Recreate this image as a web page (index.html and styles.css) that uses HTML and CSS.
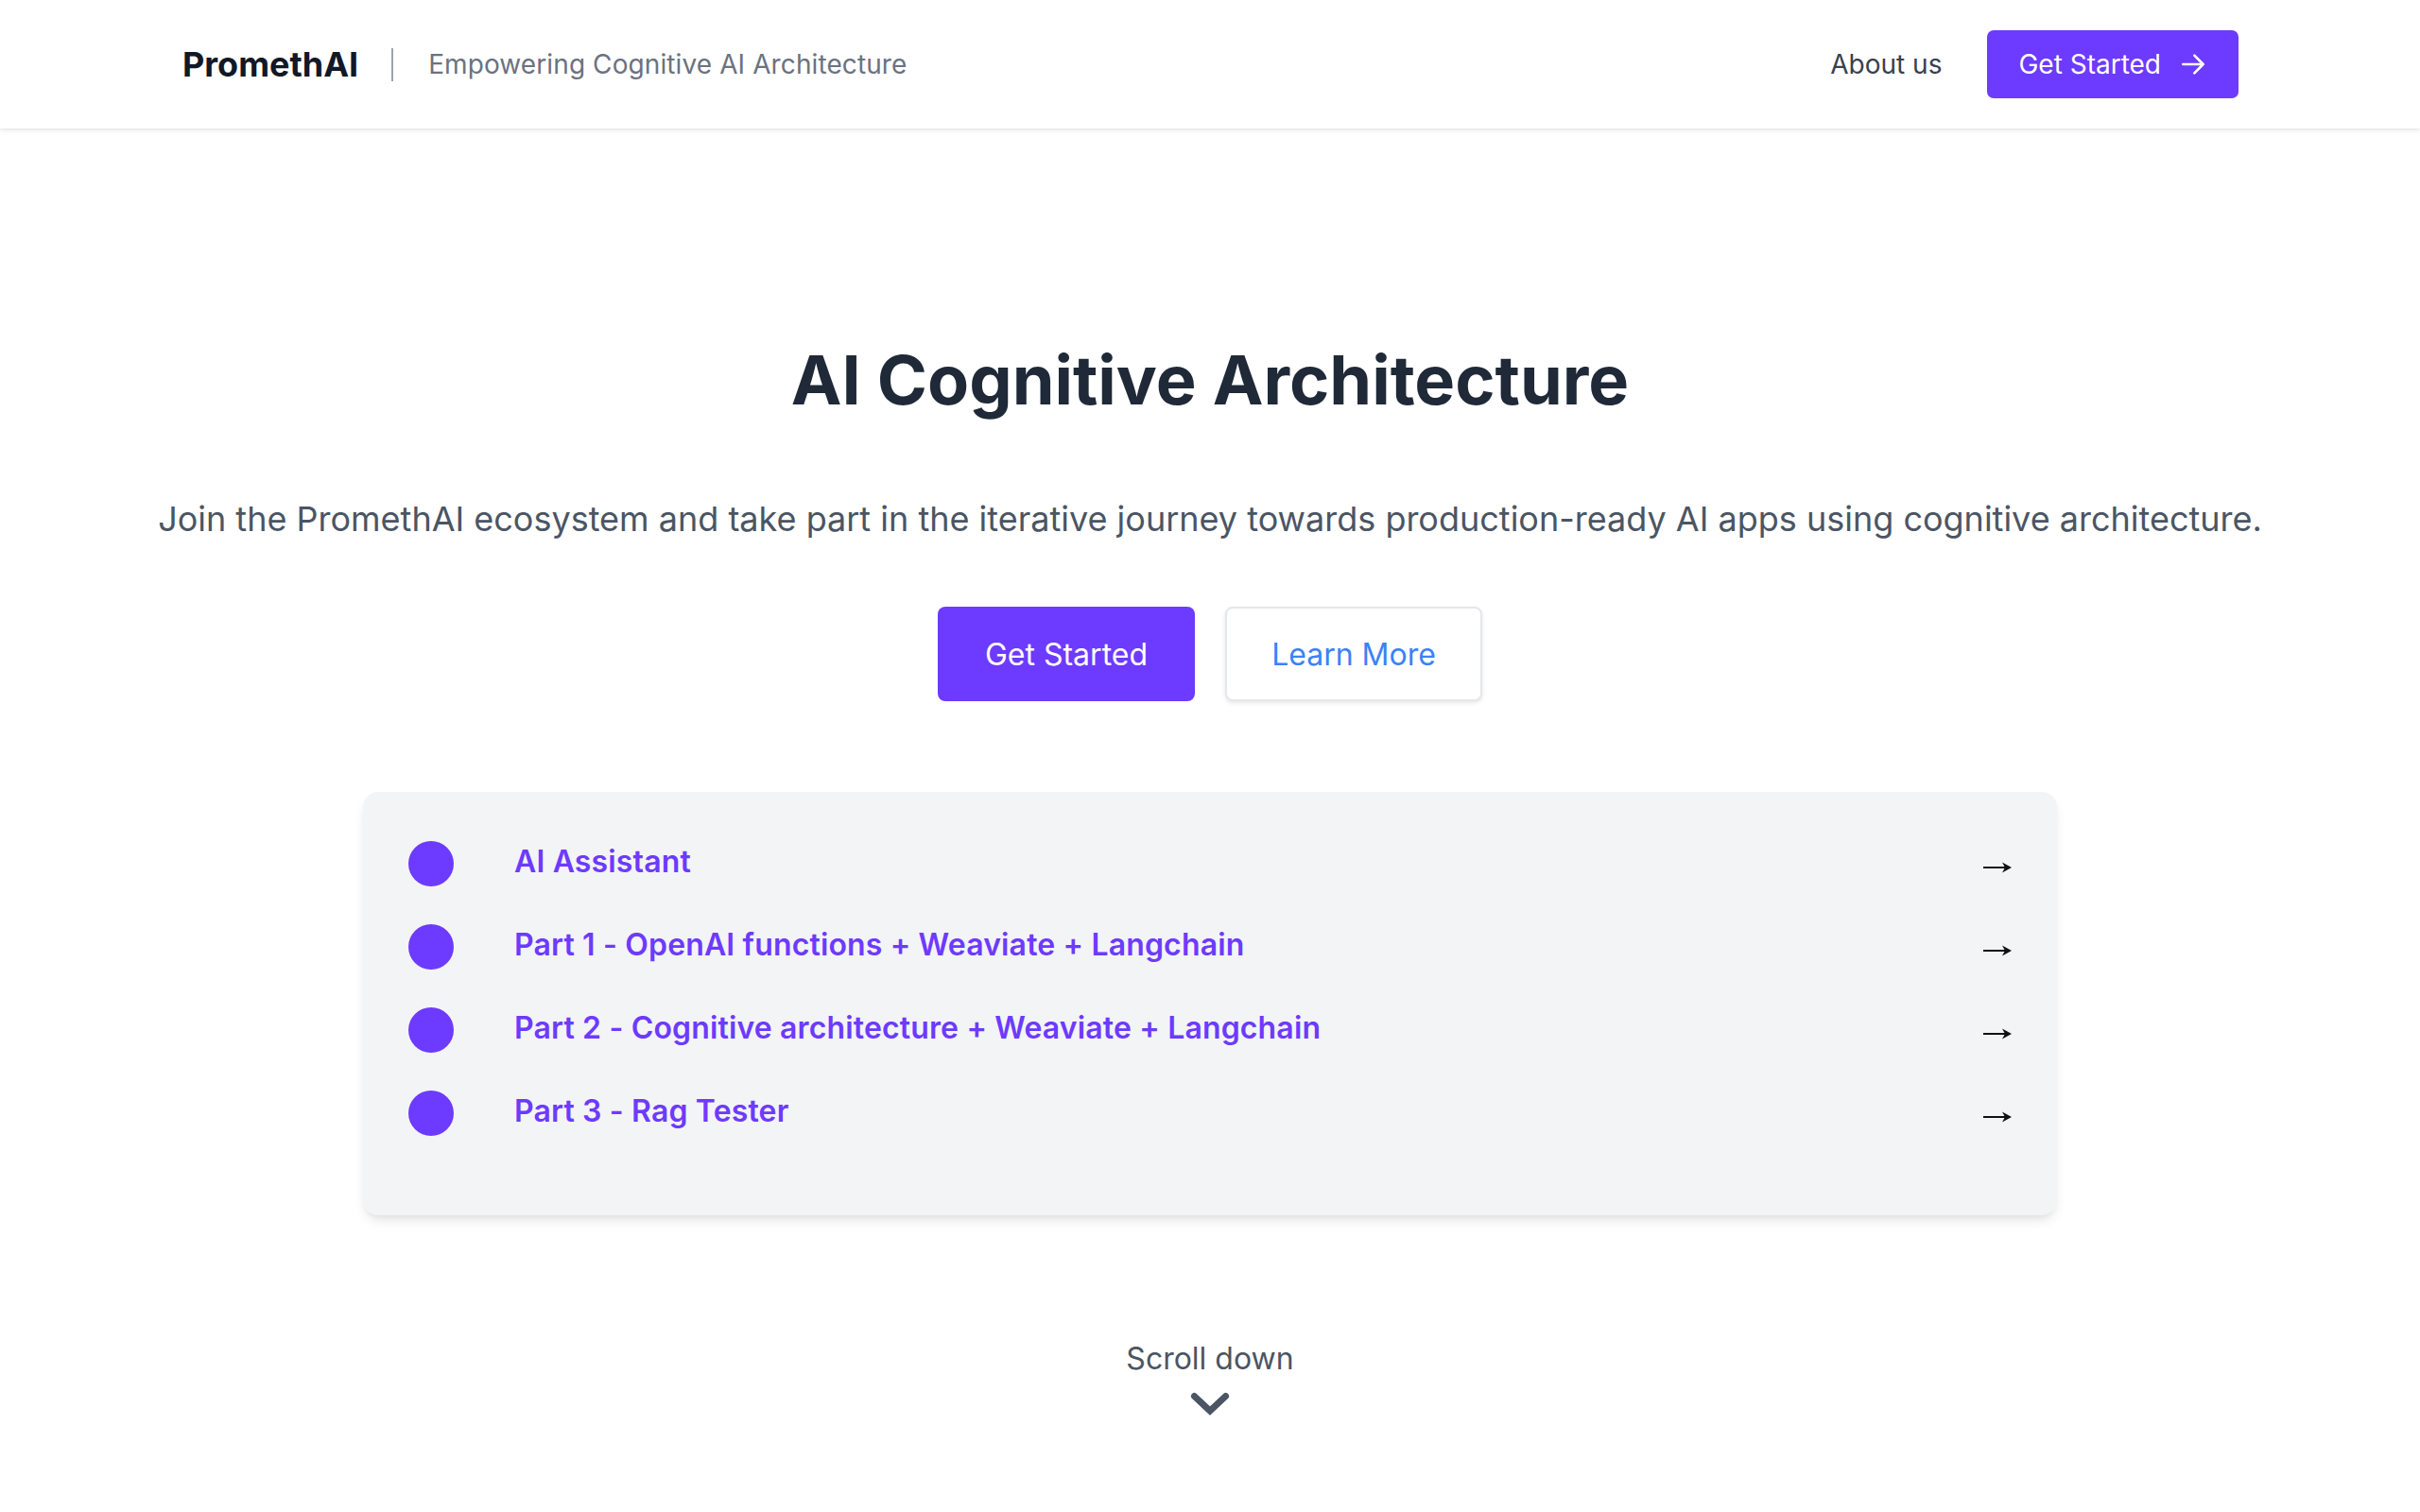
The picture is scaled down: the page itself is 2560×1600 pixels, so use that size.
FILE: index.html
```html
<!DOCTYPE html>
<html lang="en">
<head>
<meta charset="utf-8">
<title>PromethAI</title>
<link rel="stylesheet" href="styles.css">
</head>
<body>
<header class="topbar">
  <div class="brand">
    <span class="logo">PromethAI</span>
    <span class="sep"></span>
    <span class="tagline">Empowering Cognitive AI Architecture</span>
  </div>
  <nav class="nav">
    <a class="nav-link" href="#">About us</a>
    <a class="nav-btn" href="#">Get Started
      <svg class="nav-arrow" viewBox="0 0 24 24" fill="none" stroke="currentColor" stroke-width="2" stroke-linecap="round" stroke-linejoin="round"><path d="M4 12h16M13 5l7 7-7 7"/></svg>
    </a>
  </nav>
</header>
<main class="hero">
  <h1 class="title">AI Cognitive Architecture</h1>
  <p class="lead">Join the PromethAI ecosystem and take part in the iterative journey towards production-ready AI apps using cognitive architecture.</p>
  <div class="actions">
    <a class="btn btn-primary" href="#">Get Started</a>
    <a class="btn btn-secondary" href="#">Learn More</a>
  </div>
  <section class="card">
    <a class="row" href="#"><span class="dot"></span><span class="row-text">AI Assistant</span><svg class="row-arrow" viewBox="0 0 30 14"><path d="M0 7h26" stroke="#111" stroke-width="2"/><path d="M20 1.5L30 7l-10 5.5 3-5.5z" fill="#111"/></svg></a>
    <a class="row" href="#"><span class="dot"></span><span class="row-text">Part 1 - OpenAI functions + Weaviate + Langchain</span><svg class="row-arrow" viewBox="0 0 30 14"><path d="M0 7h26" stroke="#111" stroke-width="2"/><path d="M20 1.5L30 7l-10 5.5 3-5.5z" fill="#111"/></svg></a>
    <a class="row" href="#"><span class="dot"></span><span class="row-text">Part 2 - Cognitive architecture + Weaviate + Langchain</span><svg class="row-arrow" viewBox="0 0 30 14"><path d="M0 7h26" stroke="#111" stroke-width="2"/><path d="M20 1.5L30 7l-10 5.5 3-5.5z" fill="#111"/></svg></a>
    <a class="row" href="#"><span class="dot"></span><span class="row-text">Part 3 - Rag Tester</span><svg class="row-arrow" viewBox="0 0 30 14"><path d="M0 7h26" stroke="#111" stroke-width="2"/><path d="M20 1.5L30 7l-10 5.5 3-5.5z" fill="#111"/></svg></a>
  </section>
  <div class="scroll">
    <span class="scroll-text">Scroll down</span>
    <svg class="chev" viewBox="0 0 42 26" fill="none" stroke="#4b5563" stroke-width="7" stroke-linecap="round" stroke-linejoin="miter"><path d="M4.5 4.5L21 20L37.5 4.5"/></svg>
  </div>
</main>
</body>
</html>
```
FILE: styles.css
```css
* { box-sizing: border-box; }
html, body { margin: 0; padding: 0; background: #ffffff; }
body { font-family: Inter, "Noto Sans", sans-serif; color: #1f2937; }
a { text-decoration: none; }

.topbar {
  height: 136px;
  display: flex;
  align-items: center;
  justify-content: space-between;
  padding: 0 192px 0 193px;
  background: #fff;
  box-shadow: 0 2px 6px rgba(0,0,0,0.08), 0 1px 2px rgba(0,0,0,0.06);
  position: relative;
  z-index: 2;
}
.brand { display: flex; align-items: center; }
.logo { font-size: 36px; font-weight: 700; color: #111827; }
.sep { width: 2px; height: 35px; background: #9ca3af; margin: 0 37px 0 35px; }
.tagline { font-size: 28px; color: #6b7280; letter-spacing: 0.1px; }
.nav { display: flex; align-items: center; gap: 48px; }
.nav-link { font-size: 28px; color: #374151; }
.nav-btn {
  display: flex; align-items: center; gap: 18px;
  height: 72px; padding: 0 32px 0 33px;
  background: #6d3aff; color: #fff; font-size: 28px;
  border-radius: 7px;
}
.nav-arrow { width: 32px; height: 32px; }

.hero { display: flex; flex-direction: column; align-items: center; padding-top: 230px; }
.title { margin: 0; font-size: 72px; line-height: 72px; font-weight: 700; color: #1f2937; }
.lead { margin: 91px 0 0; font-size: 36px; line-height: 40px; color: #4b5563; }
.actions { display: flex; gap: 32px; margin-top: 73px; }
.btn {
  width: 272px; height: 100px;
  display: flex; align-items: center; justify-content: center;
  font-size: 32px; border-radius: 8px;
}
.btn-primary { background: #6d3aff; color: #fff; }
.btn-secondary { background: #fff; color: #3b82f6; border: 2px solid #e5e7eb; box-shadow: 0 2px 4px rgba(0,0,0,0.1); }

.card {
  width: 1792px;
  margin-top: 96px;
  background: #f3f4f6;
  border-radius: 16px;
  padding: 52px 48px 84px 48px;
  display: flex; flex-direction: column; gap: 40px;
  box-shadow: 0 8px 14px -4px rgba(0,0,0,0.12), 0 3px 6px -2px rgba(0,0,0,0.05);
}
.row { display: flex; align-items: center; height: 48px; }
.dot { width: 48px; height: 48px; border-radius: 50%; background: #6d3aff; flex: none; }
.row-text { margin-left: 64px; font-size: 32px; font-weight: 600; color: #6d3aff; flex: 1; position: relative; top: -3px; letter-spacing: 0.15px; }
.row-arrow { width: 30px; height: 14px; position: relative; top: 4px; }

.scroll { display: flex; flex-direction: column; align-items: center; margin-top: 132px; }
.scroll-text { font-size: 32px; line-height: 40px; color: #4b5563; }
.chev { width: 42px; height: 26px; margin-top: 15px; }
```
